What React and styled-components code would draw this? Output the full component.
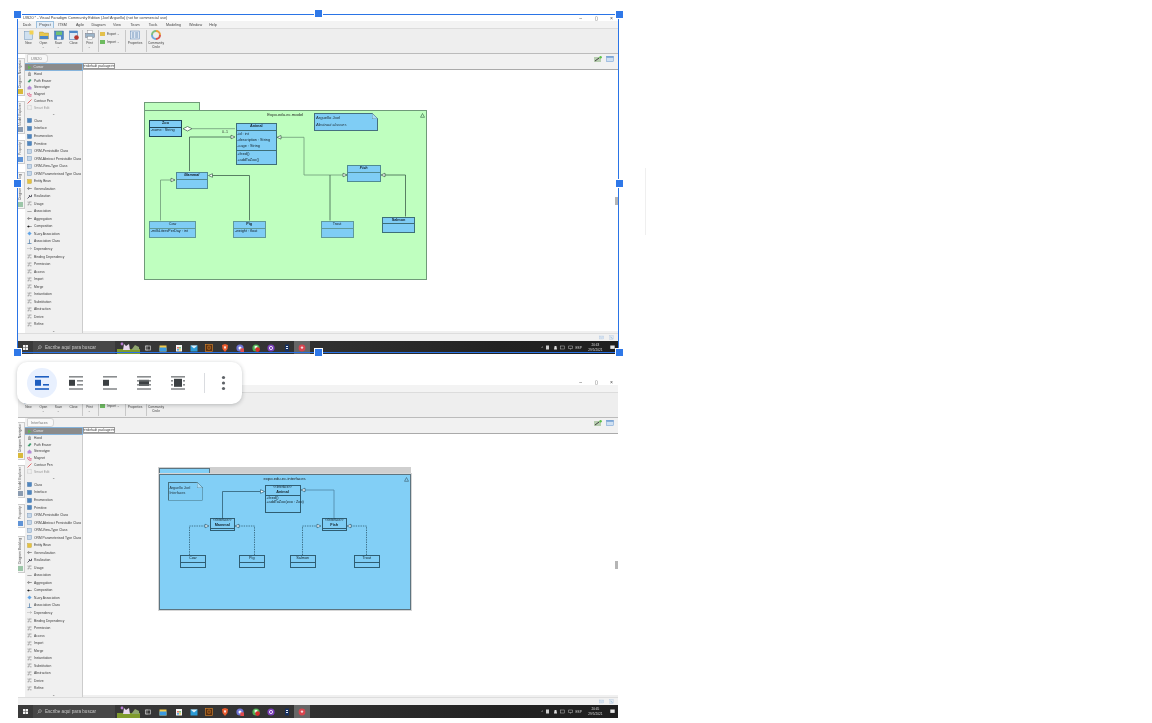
import React from "react";
import styled, { createGlobalStyle } from "styled-components";

const GlobalStyle = createGlobalStyle`
  html, body { margin: 0; padding: 0; background: #fff; }
  body { font-family: "Liberation Sans", Arial, sans-serif; }
`;

const Page = styled.div`
  position: relative;
  width: 1152px;
  height: 723px;
  overflow: hidden;
  padding: 15px 0 0 18px;
  box-sizing: border-box;
  background: #fff;
`;

const ShotFrame = styled.div`
  width: 600px;
  height: 339px;
  margin-bottom: 25px;
  display: flex;
  flex-direction: column;
  background: #fff;
  color: #333;
  filter: blur(0.3px);
`;

const TitleBar = styled.div`
  height: 6px;
  display: flex;
  align-items: center;
  padding-left: 5px;
  font-size: 3.8px;
  white-space: nowrap;
  color: #444;
`;
const WindowButtons = styled.div`
  margin-left: auto;
  display: flex;
  gap: 12.5px;
  padding-right: 5px;
  font-size: 5px;
  color: #444;
`;
const MenuBar = styled.div`
  height: 7px;
  display: flex;
  align-items: stretch;
  background: #f3f3f3;
  font-size: 3.7px;
  color: #444;
`;
const MenuItem = styled.div`
  width: ${(p) => p.$w}px;
  display: flex;
  align-items: center;
  justify-content: center;
  background: ${(p) => (p.$active ? "#e4eef8" : "transparent")};
  border: ${(p) => (p.$active ? "0.5px solid #9cc0de" : "none")};
  border-bottom: none;
  box-sizing: border-box;
`;
const Ribbon = styled.div`
  height: 26px;
  box-sizing: border-box;
  display: flex;
  background: #eeeeee;
  border-top: 1px solid #dcdcdc;
  border-bottom: 1px solid #bbb;
  padding: 1px 0 0 4px;
`;
const RibbonGroup = styled.div`
  display: flex;
  gap: ${(p) => p.$gap || 4}px;
  padding: 0 3px 0 1px;
  height: 22px;
  border-right: ${(p) => (p.$last ? "none" : "0.5px solid #c8c8c8")};
`;
const RibbonItem = styled.div`
  width: ${(p) => p.$w || 11}px;
  display: flex;
  flex-direction: column;
  align-items: center;
  font-size: 3.2px;
  line-height: 3.8px;
  text-align: center;
  color: #444;
  svg { width: 10px; height: 10px; margin-bottom: 2px; }
`;
const RibbonStack = styled.div`
  width: 22px;
  display: flex;
  flex-direction: column;
  gap: 2px;
  padding-top: 1px;
  font-size: 3.2px;
  color: #444;
`;
const StackLine = styled.div`
  display: flex;
  align-items: center;
  gap: 2px;
  height: 6px;
  i { width: 5px; height: 4px; background: ${(p) => p.$color}; display: block; }
`;

const Body = styled.div`
  flex: 1;
  display: flex;
  min-height: 0;
`;
const SideTabs = styled.div`
  width: 7px;
  flex: none;
  display: flex;
  flex-direction: column;
  padding-top: 4px;
  background: #fff;
`;
const SideTab = styled.div`
  height: ${(p) => p.$h}px;
  margin-bottom: ${(p) => p.$mb}px;
  box-sizing: border-box;
  display: flex;
  align-items: flex-start;
  justify-content: center;
  writing-mode: vertical-rl;
  transform: rotate(180deg);
  font-size: 3.4px;
  color: #555;
  background: #f4f4f4;
  border: 0.5px solid #ccc;
  border-right: none;
  padding-top: 6px;
  position: relative;
  white-space: nowrap;
  &::before {
    content: "";
    position: absolute;
    top: 1px;
    left: 1px;
    width: 4.5px;
    height: 4.5px;
    background: ${(p) => p.$icon};
  }
`;
const Main = styled.div`
  flex: 1;
  min-width: 0;
  display: flex;
  flex-direction: column;
`;
const CrumbRow = styled.div`
  height: 9px;
  flex: none;
  box-sizing: border-box;
  display: flex;
  align-items: center;
  padding-left: 2px;
  background: #f1f1f1;
`;
const Crumb = styled.div`
  height: 6.5px;
  padding: 0 5px 0 3px;
  display: flex;
  align-items: center;
  font-size: 3.8px;
  color: #777;
  background: #f8f8f8;
  border: 0.5px solid #d4d4d4;
  border-radius: 1px 3px 3px 1px;
`;
const CrumbTools = styled.div`
  margin-left: auto;
  display: flex;
  gap: 4px;
  padding-right: 4px;
  svg { width: 8px; height: 6px; }
`;
const Workspace = styled.div`
  flex: 1;
  display: flex;
  min-height: 0;
`;
const Palette = styled.div`
  width: 58px;
  flex: none;
  box-sizing: border-box;
  padding-top: 0.6px;
  background: #f0f0f0;
  border-right: 0.5px solid #ccc;
`;
const PaletteRow = styled.div`
  height: ${(p) => p.$h}px;
  box-sizing: border-box;
  display: flex;
  align-items: center;
  gap: 2px;
  padding-left: ${(p) => (p.$selected ? 1.5 : 2)}px;
  font-size: 3.3px;
  white-space: nowrap;
  color: ${(p) => (p.$selected ? "#e8e8e8" : p.$muted ? "#999" : "#3c3c3c")};
  background: ${(p) => (p.$selected ? "#8b8b8b" : "transparent")};
  outline: ${(p) => (p.$selected ? "0.5px solid #86b4dc" : "none")};
  svg { width: 5px; height: 5px; flex: none; }
`;
const PaletteChevron = styled.div`
  height: ${(p) => p.$h}px;
  display: flex;
  align-items: center;
  justify-content: center;
  font-size: 3.5px;
  color: #666;
`;
const Editor = styled.div`
  flex: 1;
  min-width: 0;
  display: flex;
  flex-direction: column;
`;
const DocTabs = styled.div`
  height: 7px;
  flex: none;
  box-sizing: border-box;
  display: flex;
  align-items: flex-end;
  background: #f1f1f1;
  border-bottom: 1px solid #aaa;
`;
const DocTab = styled.div`
  height: 6px;
  width: 32px;
  box-sizing: border-box;
  display: flex;
  align-items: center;
  justify-content: center;
  font-size: 3.3px;
  color: #333;
  white-space: nowrap;
  background: #fff;
  border: 0.5px solid #999;
`;
const Canvas = styled.div`
  position: relative;
  flex: 1;
  background: #fff;
`;
const CanvasScroll = styled.div`
  position: absolute;
  right: 0;
  top: 127px;
  width: 3px;
  height: 8px;
  background: #b5b5b5;
`;
const BottomStrip = styled.div`
  height: 2px;
  flex: none;
  background: #f0f0f0;
`;
const StatusBar = styled.div`
  height: 8px;
  flex: none;
  display: flex;
  align-items: center;
  justify-content: flex-end;
  gap: 5px;
  padding-right: 4px;
  background: #f1f1f1;
  border-top: 0.5px solid #ddd;
  box-sizing: border-box;
  svg { width: 5px; height: 5px; }
`;

const Taskbar = styled.div`
  height: 13px;
  flex: none;
  display: flex;
  align-items: center;
  background: linear-gradient(90deg, #3a3a3a 0%, #333 45%, #222 80%, #1f1f1f 100%);
  color: #ddd;
`;
const StartButton = styled.div`
  width: 15px;
  display: flex;
  justify-content: center;
  svg { width: 5px; height: 5px; }
`;
const SearchBox = styled.div`
  width: 82px;
  height: 13px;
  box-sizing: border-box;
  display: flex;
  align-items: center;
  gap: 3px;
  padding-left: 4px;
  background: #474747;
  font-size: 4.6px;
  color: #c8c8c8;
  white-space: nowrap;
  svg { width: 5px; height: 5px; }
`;
const SearchPicture = styled.svg`
  width: 23px;
  height: 13px;
  margin-left: 2px;
  flex: none;
`;
const TaskIcons = styled.div`
  display: flex;
  align-items: center;
  margin-left: 0;
`;
const TaskIcon = styled.div`
  width: 15.45px;
  height: 13px;
  display: flex;
  align-items: center;
  justify-content: center;
  background: ${(p) => (p.$active ? "#666" : "transparent")};
  svg { width: 8px; height: 8px; }
`;
const Tray = styled.div`
  margin-left: auto;
  display: flex;
  align-items: center;
  gap: 2.5px;
  padding-right: 3px;
  font-size: 3.2px;
  color: #ddd;
  svg { width: 5px; height: 5px; }
`;
const Clock = styled.div`
  margin: 0 5px 0 4px;
  text-align: center;
  line-height: 4.4px;
  font-size: 3.2px;
`;

/* diagram parts: places on the canvas are the content */
const Package = styled.div`
  position: absolute;
  left: ${(p) => p.$x}px;
  top: ${(p) => p.$y}px;
  width: ${(p) => p.$w}px;
  height: ${(p) => p.$h}px;
  box-sizing: border-box;
  background: ${(p) => p.$fill};
  border: 0.8px solid ${(p) => p.$line};
  box-shadow: ${(p) => (p.$halo ? "0 0 0 1px #d6d6d6" : "none")};
`;
const PackageTab = styled.div`
  position: absolute;
  left: ${(p) => p.$x}px;
  top: ${(p) => p.$y}px;
  width: ${(p) => p.$w}px;
  height: ${(p) => p.$h}px;
  box-sizing: border-box;
  background: ${(p) => p.$fill};
  border: 0.7px solid ${(p) => p.$line};
  border-bottom: none;
`;
const PackageBand = styled.div`
  position: absolute;
  left: ${(p) => p.$x}px;
  top: ${(p) => p.$y}px;
  width: ${(p) => p.$w}px;
  height: ${(p) => p.$h}px;
  background: #cfcfcf;
`;
const PackageName = styled.div`
  position: absolute;
  left: 0;
  right: 0;
  top: 1px;
  text-align: center;
  font-size: 4.2px;
  line-height: 5px;
  color: #222;
`;
const PackageMark = styled.svg`
  position: absolute;
  right: 1px;
  top: 2px;
  width: 5px;
  height: 5px;
`;
const ClassBox = styled.div`
  position: absolute;
  left: ${(p) => p.$x}px;
  top: ${(p) => p.$y}px;
  width: ${(p) => p.$w}px;
  height: ${(p) => p.$h}px;
  box-sizing: border-box;
  display: flex;
  flex-direction: column;
  background: #7fcdf5;
  border: 0.7px solid ${(p) => p.$line || "#3d6f78"};
  font-size: 3.8px;
  line-height: 5px;
  color: #14222a;
  white-space: nowrap;
`;
const ClassHead = styled.div`
  height: ${(p) => p.$h}px;
  flex: none;
  box-sizing: border-box;
  text-align: center;
  font-weight: ${(p) => (p.$plain ? 400 : 700)};
  font-style: ${(p) => (p.$italic ? "italic" : "normal")};
  border-bottom: 0.7px solid ${(p) => p.$line || "#3d6f78"};
`;
const Stereotype = styled.div`
  font-size: 3px;
  line-height: 3.6px;
  font-weight: 400;
`;
const Compartment = styled.div`
  padding-left: 0.8px;
  line-height: ${(p) => p.$lh || 5.4}px;
  border-bottom: ${(p) => (p.$divider ? "0.7px solid #3d6f78" : "none")};
  height: ${(p) => (p.$h ? `${p.$h}px` : "auto")};
  box-sizing: border-box;
`;
const Note = styled.div`
  position: absolute;
  left: ${(p) => p.$x}px;
  top: ${(p) => p.$y}px;
  width: ${(p) => p.$w}px;
  height: ${(p) => p.$h}px;
  padding: ${(p) => p.$pad}px 0 0 1px;
  box-sizing: border-box;
  font-size: ${(p) => p.$fs}px;
  line-height: ${(p) => p.$lh}px;
  color: #1f2d35;
  background: #7fcdf5;
  border: 0.7px solid #45707f;
  clip-path: polygon(0 0, calc(100% - 6px) 0, 100% 6px, 100% 100%, 0 100%);
`;
const NoteFold = styled.svg`
  position: absolute;
  left: ${(p) => p.$x}px;
  top: ${(p) => p.$y}px;
  width: 6px;
  height: 6px;
`;
const Wires = styled.svg`
  position: absolute;
  left: 0;
  top: 0;
  width: 535px;
  height: 261px;
  pointer-events: none;
`;
const Multiplicity = styled.div`
  position: absolute;
  left: ${(p) => p.$x}px;
  top: ${(p) => p.$y}px;
  font-size: 3.6px;
  color: #333;
`;

/* overlays on the page */
const SelectionFrame = styled.div`
  position: absolute;
  left: 17px;
  top: 14px;
  width: 602px;
  height: 339px;
  box-sizing: border-box;
  border: 1px solid #2a74e6;
`;
const Handle = styled.div`
  position: absolute;
  left: ${(p) => p.$x}px;
  top: ${(p) => p.$y}px;
  width: 7px;
  height: 7px;
  background: #2f78e8;
  outline: 1px solid #fff;
`;
const FaintLine = styled.div`
  position: absolute;
  left: 645px;
  top: 168px;
  width: 1px;
  height: 67px;
  background: #efefef;
`;
const Toolbar = styled.div`
  position: absolute;
  left: 17px;
  top: 362px;
  width: 225px;
  height: 42px;
  box-sizing: border-box;
  display: flex;
  align-items: center;
  padding-left: 10px;
  background: #fff;
  border-radius: 10px;
  box-shadow: 0 1px 4px rgba(60, 64, 67, 0.32);
`;
const WrapButton = styled.div`
  width: 30px;
  height: 30px;
  margin-right: 4px;
  display: flex;
  align-items: center;
  justify-content: center;
  border-radius: 50%;
  background: ${(p) => (p.$active ? "#e8f0fe" : "transparent")};
  color: ${(p) => (p.$active ? "#1f5fc0" : "#6d7073")};
  svg { width: 14px; height: 14px; }
`;
const ToolbarDivider = styled.div`
  width: 1px;
  height: 20px;
  margin: 0 16px 0 7px;
  background: #dadce0;
`;
const MoreDots = styled.svg`
  width: 5px;
  height: 16px;
  color: #5f6368;
`;

const menu = [
  ["Dash", 18], ["Project", 18], ["ITSM", 17], ["Agile", 18], ["Diagram", 19],
  ["View", 18], ["Team", 18], ["Tools", 18], ["Modeling", 23], ["Window", 21], ["Help", 14],
];

const tabs = [
  ["Diagram Navigator", 38, 5, "#d8b93a"],
  ["Model Explorer", 33, 6, "#8a9bb0"],
  ["Property", 24, 8, "#5f93d6"],
  ["Diagram Backlog", 37, 0, "#9cc6a8"],
];

const glyphs = {
  cursor: <path d="M1 0.5 L4.5 3 L2.6 3.2 L1.6 4.8 Z" fill="#5cc04a" />,
  hand: <path d="M1.5 4.5 V1.5 M2.5 4.5 V0.8 M3.5 4.5 V1.5 M1 4.6 H4" stroke="#666" strokeWidth="0.5" fill="none" />,
  eraser: <path d="M0.5 4 L3 1 L4.5 2 L2.5 4.5 Z" fill="#3f9a6d" />,
  stereo: <path d="M0.5 4.5 H4.5 V2.5 L2.5 0.5 L0.5 2.5 Z" fill="#b48bd6" />,
  magnet: <path d="M1 1 C0 3 2 4.8 4.5 4 M2.5 0.8 C1.8 2.2 3 3 4.5 2.6" stroke="#df3c6c" strokeWidth="0.8" fill="none" />,
  pen: <path d="M0.5 4.5 L4.5 0.5" stroke="#d33" strokeWidth="0.7" />,
  edit: <rect x="0.6" y="0.6" width="3.8" height="3.8" fill="none" stroke="#aaa" strokeWidth="0.5" strokeDasharray="0.7 0.5" />,
  cls: <rect x="0.4" y="0.4" width="4.2" height="4.2" fill="#4f86c0" stroke="#2d5f94" strokeWidth="0.3" />,
  orm: <rect x="0.4" y="0.4" width="4.2" height="4.2" fill="#c4d6e8" stroke="#6d8fb3" strokeWidth="0.4" />,
  bean: <rect x="0.5" y="0.5" width="4" height="4" fill="#e6c23e" stroke="#a78a22" strokeWidth="0.3" />,
  gen: <path d="M4.8 2.5 H1.6 M0.4 2.5 L1.8 1.5 V3.5 Z" stroke="#444" strokeWidth="0.5" fill="#fff" />,
  real: <path d="M0.5 4.5 L2.4 2.6 H4.5 V0.8 M2.4 2.6 V1" stroke="#334" strokeWidth="0.8" fill="none" />,
  line: <path d="M0.3 2.5 H4.7" stroke="#666" strokeWidth="0.5" />,
  comp: <path d="M0.3 2.5 L1.5 1.7 L2.7 2.5 L1.5 3.3 Z M2.7 2.5 H4.8" stroke="#222" strokeWidth="0.4" fill="#222" />,
  nary: <path d="M2.5 0.5 L4.6 2.5 L2.5 4.5 L0.4 2.5 Z" fill="#63a5e6" />,
  aclass: <path d="M2.5 0.4 V4.6 M0.5 4.5 H4.5" stroke="#4f7ba8" strokeWidth="0.7" />,
  dep: <path d="M0.4 2.5 H4.4 M3 1.3 L4.5 2.5 L3 3.7" stroke="#666" strokeWidth="0.4" strokeDasharray="0.8 0.4" fill="none" />,
  rel: <path d="M0.5 3.8 H2 V1 H4.5 M0.5 1 H1.5 M3 3.8 H4.5" stroke="#777" strokeWidth="0.6" fill="none" />,
};

const toolsTop = [
  ["Cursor", "cursor"], ["Hand", "hand"], ["Path Eraser", "eraser"], ["Stereotype", "stereo"],
  ["Magnet", "magnet"], ["Contour Pen", "pen"], ["Smart Edit", "edit"],
];
const toolsRest = [
  ["Class", "cls"], ["Interface", "cls"], ["Enumeration", "cls"], ["Primitive", "cls"],
  ["ORM-Persistable Class", "orm"], ["ORM-Abstract Persistable Class", "orm"],
  ["ORM-View-Type Class", "orm"], ["ORM Parameterised Type Class", "orm"], ["Entity Bean", "bean"],
  ["Generalization", "gen"], ["Realization", "real"], ["Usage", "rel"], ["Association", "line"],
  ["Aggregation", "gen"], ["Composition", "comp"], ["N-ary Association", "nary"],
  ["Association Class", "aclass"], ["Dependency", "dep"], ["Binding Dependency", "rel"],
  ["Permission", "rel"], ["Access", "rel"], ["Import", "rel"], ["Merge", "rel"],
  ["Instantiation", "rel"], ["Substitution", "rel"], ["Abstraction", "rel"], ["Derive", "rel"], ["Refine", "rel"],
];

const PaletteIcon = ({ kind }) => <svg viewBox="0 0 5 5">{glyphs[kind]}</svg>;

const NewIcon = () => (
  <svg viewBox="0 0 10 10">
    <rect x="0.5" y="1.5" width="8" height="8" fill="#cfe0f0" stroke="#6f93b8" strokeWidth="0.5" />
    <rect x="5.5" y="0.5" width="4" height="4" fill="#f2d255" />
  </svg>
);
const OpenIcon = () => (
  <svg viewBox="0 0 10 10">
    <path d="M0.5 2 H4 L5 3 H9.5 V9 H0.5 Z" fill="#e9c84d" stroke="#a88b2a" strokeWidth="0.4" />
    <rect x="0.8" y="6" width="8.4" height="3" fill="#4d87c7" />
  </svg>
);
const SaveIcon = () => (
  <svg viewBox="0 0 10 10">
    <rect x="0.5" y="1" width="9" height="8.5" fill="#4d87c7" stroke="#2f6098" strokeWidth="0.4" />
    <rect x="2" y="1.5" width="6" height="3.5" fill="#6fbf73" />
    <rect x="3" y="6.5" width="4" height="3" fill="#e8eef5" />
  </svg>
);
const CloseIcon = () => (
  <svg viewBox="0 0 10 10">
    <rect x="0.5" y="1" width="8" height="8.5" fill="#dfe8f2" stroke="#4d7fb8" strokeWidth="0.6" />
    <rect x="0.5" y="1" width="8" height="2" fill="#4d87c7" />
    <circle cx="7.5" cy="7.5" r="2.3" fill="#b8362e" />
  </svg>
);
const PrintIcon = () => (
  <svg viewBox="0 0 10 10">
    <rect x="2.5" y="0.5" width="5" height="3" fill="#fff" stroke="#888" strokeWidth="0.4" />
    <rect x="0.5" y="3.5" width="9" height="4" fill="#9bb4c8" stroke="#667" strokeWidth="0.4" />
    <rect x="2.5" y="6.5" width="5" height="3" fill="#fff" stroke="#888" strokeWidth="0.4" />
  </svg>
);
const PropsIcon = () => (
  <svg viewBox="0 0 10 10">
    <rect x="0.5" y="1" width="9" height="8" fill="#dce6f2" stroke="#5f86b3" strokeWidth="0.5" />
    <path d="M2 3 H4 M2 5 H4 M2 7 H4 M5.2 3 H8 M5.2 5 H8 M5.2 7 H8" stroke="#4d78ab" strokeWidth="0.7" />
  </svg>
);
const CircleIcon = () => (
  <svg viewBox="0 0 10 10" fill="none" strokeWidth="2">
    <path d="M5 1 A4 4 0 0 1 9 5" stroke="#e9a13b" />
    <path d="M9 5 A4 4 0 0 1 5 9" stroke="#d9534f" />
    <path d="M5 9 A4 4 0 0 1 1 5" stroke="#6fa8dc" />
    <path d="M1 5 A4 4 0 0 1 5 1" stroke="#7fbf7f" />
  </svg>
);
const DocSwitchIcon = () => (
  <svg viewBox="0 0 8 6">
    <rect x="0" y="1" width="7" height="5" fill="#b7cdb0" />
    <path d="M1 5 L5 2" stroke="#333" strokeWidth="0.9" />
    <circle cx="6.6" cy="1.2" r="1.2" fill="#5cc04a" />
  </svg>
);
const LayoutIcon = () => (
  <svg viewBox="0 0 8 6">
    <rect x="0.5" y="0.3" width="7" height="5.4" fill="#cfe0f2" stroke="#6c9ad0" strokeWidth="0.5" />
    <rect x="0.5" y="0.3" width="7" height="1.4" fill="#6c9ad0" />
  </svg>
);
const MailIcon = () => (
  <svg viewBox="0 0 5 5">
    <rect x="0.3" y="1" width="4.4" height="3" fill="#dbe6f2" stroke="#a9c1dc" strokeWidth="0.3" />
    <path d="M0.3 1 L2.5 2.8 L4.7 1" stroke="#a9c1dc" strokeWidth="0.3" fill="none" />
  </svg>
);
const PageIcon = () => (
  <svg viewBox="0 0 5 5">
    <rect x="0.7" y="0.3" width="3.6" height="4.4" fill="#e0e8f0" stroke="#a9c1dc" strokeWidth="0.3" />
    <path d="M1.5 2 L3.5 3.5" stroke="#5c9cc8" strokeWidth="0.5" />
  </svg>
);

const taskIcons = [
  <svg key="a" viewBox="0 0 8 8"><rect x="1.5" y="2" width="5" height="4" fill="none" stroke="#ccc" strokeWidth="0.7" /><path d="M3 1 V7" stroke="#ccc" strokeWidth="0.5" /></svg>,
  <svg key="b" viewBox="0 0 8 8"><rect x="0.5" y="1.5" width="7" height="6" fill="#f2c94c" /><rect x="0.5" y="3.5" width="7" height="4" fill="#3b9ae1" /></svg>,
  <svg key="c" viewBox="0 0 8 8"><rect x="1" y="1" width="6" height="6.5" fill="#f5f5f5" /><rect x="2.2" y="3" width="1.6" height="1.6" fill="#e2574c" /><rect x="4.2" y="3" width="1.6" height="1.6" fill="#5cb85c" /><rect x="2.2" y="5" width="1.6" height="1.6" fill="#3b9ae1" /><rect x="4.2" y="5" width="1.6" height="1.6" fill="#f2c94c" /></svg>,
  <svg key="d" viewBox="0 0 8 8"><rect x="0.5" y="1.5" width="7" height="6" fill="#2b9bd6" /><path d="M0.5 1.5 L4 4.5 L7.5 1.5" fill="#d9eefa" /></svg>,
  <svg key="e" viewBox="0 0 8 8"><rect x="0.5" y="0.5" width="7" height="7" fill="#5a2f0f" stroke="#e08a2e" strokeWidth="0.6" /><path d="M2.8 2 H5.2 V5.2 H2.8 Z" fill="none" stroke="#e08a2e" strokeWidth="0.6" /></svg>,
  <svg key="f" viewBox="0 0 8 8"><path d="M1 1 L4 0 L7 1 L6.5 5 L4 8 L1.5 5 Z" fill="#ea5a2c" /><path d="M2.8 2.6 H5.2 L4 5.4 Z" fill="#fff" /></svg>,
  <svg key="g" viewBox="0 0 8 8"><circle cx="4" cy="4" r="3.6" fill="#6f74d6" /><circle cx="4" cy="4" r="1.5" fill="#fff" /><rect x="4.4" y="4.4" width="3.6" height="3.6" fill="#e04b4b" /></svg>,
  <svg key="h" viewBox="0 0 8 8"><circle cx="4" cy="4" r="3.6" fill="#4bb04f" /><rect x="2.6" y="1.8" width="2.8" height="2.8" fill="#eaf7ea" /><circle cx="5.6" cy="5.6" r="2.3" fill="#d92c2c" /></svg>,
  <svg key="i" viewBox="0 0 8 8"><circle cx="4" cy="4" r="3.6" fill="#7a3fb8" /><circle cx="4" cy="4" r="1.6" fill="none" stroke="#fff" strokeWidth="0.8" /></svg>,
  <svg key="j" viewBox="0 0 8 8"><rect x="2" y="0.5" width="4" height="7" fill="#16305f" /><rect x="3" y="2" width="2" height="1" fill="#dfe7f5" /><rect x="3" y="4" width="2" height="1" fill="#dfe7f5" /></svg>,
  <svg key="k" viewBox="0 0 8 8"><circle cx="4" cy="4" r="3.4" fill="#d8454f" /><circle cx="4" cy="3.6" r="1.2" fill="#f7d9dc" /></svg>,
];

const Shot = ({ crumb, clock, children }) => (
  <ShotFrame>
    <TitleBar>
      UIS20 * - Visual Paradigm Community Edition (Joel Arguello) (not for commercial use)
      <WindowButtons>
        <span>–</span>
        <span>▯</span>
        <span>×</span>
      </WindowButtons>
    </TitleBar>
    <MenuBar>
      {menu.map(([name, w]) => (
        <MenuItem key={name} $w={w} $active={name === "Project"}>{name}</MenuItem>
      ))}
    </MenuBar>
    <Ribbon>
      <RibbonGroup $gap={4}>
        <RibbonItem><NewIcon />New</RibbonItem>
        <RibbonItem><OpenIcon />Open<br />⌄</RibbonItem>
        <RibbonItem><SaveIcon />Save<br />⌄</RibbonItem>
        <RibbonItem><CloseIcon />Close</RibbonItem>
      </RibbonGroup>
      <RibbonGroup>
        <RibbonItem><PrintIcon />Print<br />⌄</RibbonItem>
      </RibbonGroup>
      <RibbonGroup>
        <RibbonStack>
          <StackLine $color="#e3c04b"><i />Export ⌄</StackLine>
          <StackLine $color="#6dbb5f"><i />Import ⌄</StackLine>
        </RibbonStack>
      </RibbonGroup>
      <RibbonGroup>
        <RibbonItem $w={16}><PropsIcon />Properties</RibbonItem>
      </RibbonGroup>
      <RibbonGroup $last>
        <RibbonItem $w={16}><CircleIcon />Community<br />Circle</RibbonItem>
      </RibbonGroup>
    </Ribbon>
    <Body>
      <SideTabs>
        {tabs.map(([name, h, mb, icon]) => (
          <SideTab key={name} $h={h} $mb={mb} $icon={icon}>{name}</SideTab>
        ))}
      </SideTabs>
      <Main>
        <CrumbRow>
          <Crumb>{crumb}</Crumb>
          <CrumbTools>
            <DocSwitchIcon />
            <LayoutIcon />
          </CrumbTools>
        </CrumbRow>
        <Workspace>
          <Palette>
            {toolsTop.map(([name, kind], i) => (
              <PaletteRow key={name} $h={6.83} $selected={i === 0} $muted={kind === "edit"}>
                <PaletteIcon kind={kind} />
                {name}
              </PaletteRow>
            ))}
            <PaletteChevron $h={5.8}>⌄</PaletteChevron>
            {toolsRest.map(([name, kind]) => (
              <PaletteRow key={name} $h={7.54}>
                <PaletteIcon kind={kind} />
                {name}
              </PaletteRow>
            ))}
            <PaletteChevron $h={5}>⌄</PaletteChevron>
          </Palette>
          <Editor>
            <DocTabs>
              <DocTab>&lt;&lt;default package&gt;&gt;</DocTab>
            </DocTabs>
            <Canvas>
              {children}
              <CanvasScroll />
            </Canvas>
            <BottomStrip />
          </Editor>
        </Workspace>
      </Main>
    </Body>
    <StatusBar>
      <MailIcon />
      <PageIcon />
    </StatusBar>
    <Taskbar>
      <StartButton>
        <svg viewBox="0 0 5 5" fill="#f2f2f2">
          <rect x="0" y="0" width="2.3" height="2.3" />
          <rect x="2.7" y="0" width="2.3" height="2.3" />
          <rect x="0" y="2.7" width="2.3" height="2.3" />
          <rect x="2.7" y="2.7" width="2.3" height="2.3" />
        </svg>
      </StartButton>
      <SearchBox>
        <svg viewBox="0 0 5 5" fill="none" stroke="#ccc" strokeWidth="0.5">
          <circle cx="3" cy="2" r="1.4" />
          <path d="M2 3 L0.6 4.4" />
        </svg>
        Escribe aquí para buscar
      </SearchBox>
      <SearchPicture viewBox="0 0 23 13">
        <rect x="0" y="8" width="23" height="5" fill="#7f9b2d" />
        <path d="M6 9 L7 3 L9 5 L12 3 L13 9 Z" fill="#e9d8ee" />
        <path d="M15 8 L18 4 L22 6 V9 H15 Z" fill="#8fa56e" />
        <circle cx="5" cy="3" r="1.4" fill="#b57bd0" />
      </SearchPicture>
      <TaskIcons>
        {taskIcons.map((icon, i) => (
          <TaskIcon key={i} $active={i === taskIcons.length - 1}>{icon}</TaskIcon>
        ))}
      </TaskIcons>
      <Tray>
        <span>^</span>
        <svg viewBox="0 0 5 5"><rect x="1" y="0.5" width="3" height="4" fill="#ccc" /></svg>
        <svg viewBox="0 0 5 5"><path d="M1 4.5 H4 L3.4 1 H1.6 Z" fill="#ddd" /></svg>
        <svg viewBox="0 0 5 5"><rect x="0.5" y="1" width="4" height="3" fill="none" stroke="#bbb" strokeWidth="0.5" /></svg>
        <svg viewBox="0 0 5 5"><path d="M0.5 1 H4.5 V3.5 H0.5 Z M2.5 3.5 V4.7" fill="none" stroke="#bbb" strokeWidth="0.5" /></svg>
        <span>ESP</span>
        <Clock>{clock}<br />29/5/2021</Clock>
        <svg viewBox="0 0 5 5"><rect x="0.3" y="0.5" width="4.4" height="3.4" fill="#e6e6e6" /></svg>
      </Tray>
    </Taskbar>
  </ShotFrame>
);

// triangle head pointing at (x, y), dir = 1 tip on the left, -1 tip on the right
const Head = ({ x, y, dir, stroke }) => (
  <polygon
    points={`${x},${y} ${x + dir * 4},${y - 1.8} ${x + dir * 4},${y + 1.8}`}
    fill="#fff"
    stroke={stroke}
    strokeWidth="0.7"
  />
);

const wire = "#3d5f4b";
const ModelWires = () => (
  <Wires>
    <g fill="none" stroke={wire} strokeWidth="0.8">
      <path d="M109 58.7 H152" stroke="#6f9a78" />
      <path d="M106.5 101 V67 H148" />
      <path d="M264 105 H221 V67.3 H198" stroke="#6f9a78" />
      <path d="M247 150.5 V105" />
      <path d="M322.5 146.5 V105 H299" />
      <path d="M77.5 150.5 V110 H92" stroke="#6f9a78" />
      <path d="M166.5 150.5 V105.5 H126" />
    </g>
    <polygon points="100,58.7 104.5,56.5 109,58.7 104.5,61" fill="#fff" stroke={wire} strokeWidth="0.7" />
    <Head x={152} y={67} dir={-1} stroke={wire} />
    <Head x={194} y={67.3} dir={1} stroke={wire} />
    <Head x={264} y={105} dir={-1} stroke={wire} />
    <Head x={298} y={105} dir={1} stroke={wire} />
    <Head x={92} y={110} dir={-1} stroke={wire} />
    <Head x={125.5} y={105.5} dir={1} stroke={wire} />
  </Wires>
);

const ifaceLine = "#2f5d72";
const InterfaceWires = () => (
  <Wires>
    <g fill="none" stroke={ifaceLine} strokeWidth="0.8">
      <path d="M139.5 84 V57.5 H177" />
      <path d="M251 84 V56 H221" stroke="#4f86a6" />
      <g strokeDasharray="1.4 1">
        <path d="M106.5 121 V92 H122" />
        <path d="M171.5 121 V92 H156" />
        <path d="M219.5 121 V92 H234" />
        <path d="M283.5 121 V92 H268" />
      </g>
    </g>
    <Head x={181.5} y={57.5} dir={-1} stroke={ifaceLine} />
    <Head x={218} y={56} dir={1} stroke={ifaceLine} />
    <Head x={126} y={92} dir={-1} stroke={ifaceLine} />
    <Head x={152} y={92} dir={1} stroke={ifaceLine} />
    <Head x={238} y={92} dir={-1} stroke={ifaceLine} />
    <Head x={264} y={92} dir={1} stroke={ifaceLine} />
  </Wires>
);

const ModelDiagram = () => (
  <>
    <PackageTab $x={61} $y={32} $w={56} $h={9} $fill="#bfffbf" $line="#6f9a78" />
    <Package $x={61} $y={40} $w={282.5} $h={169.5} $fill="#bfffbf" $line="#6f9a78">
      <PackageName>Expo.edu.ec.model</PackageName>
      <PackageMark viewBox="0 0 5 5">
        <path d="M2.5 0.5 L4.5 4.3 H0.5 Z" fill="none" stroke="#2f5f3f" strokeWidth="0.6" />
      </PackageMark>
    </Package>
    <ModelWires />
    <Note $x={231} $y={43} $w={64} $h={18} $pad={1} $fs={4.2} $lh={6.6}>
      Arguello Joel
      <br />
      <em>Abstract classes</em>
    </Note>
    <NoteFold $x={289} $y={43} viewBox="0 0 6 6">
      <path d="M0 0 L6 6 H0 Z" fill="#a8dcf6" stroke="#45707f" strokeWidth="0.6" />
    </NoteFold>
    <ClassBox $x={66} $y={50} $w={33} $h={17} $line="#20485a">
      <ClassHead $h={7} $line="#20485a">Zoo</ClassHead>
      <Compartment>-name : String</Compartment>
    </ClassBox>
    <ClassBox $x={152.5} $y={52.5} $w={41.5} $h={42}>
      <ClassHead $h={7}>Animal</ClassHead>
      <Compartment $divider $h={20} $lh={6.2}>
        -id : int
        <br />
        -description : String
        <br />
        -cage : String
      </Compartment>
      <Compartment $lh={6.2}>
        +feed()
        <br />
        +addToZoo()
      </Compartment>
    </ClassBox>
    <ClassBox $x={92.5} $y={101.5} $w={32.5} $h={17} $line="#4f8a92">
      <ClassHead $h={7} $italic $line="#4f8a92">Mammal</ClassHead>
    </ClassBox>
    <ClassBox $x={264} $y={94.5} $w={33.5} $h={17} $line="#4f8a92">
      <ClassHead $h={7.5} $italic $line="#4f8a92">Fish</ClassHead>
    </ClassBox>
    <ClassBox $x={66} $y={150.5} $w={47} $h={17.5} $line="#5f9a9a">
      <ClassHead $h={7} $plain $line="#5f9a9a">Cow</ClassHead>
      <Compartment>-milkLitersPerDay : int</Compartment>
    </ClassBox>
    <ClassBox $x={150} $y={150.5} $w={32.5} $h={17.5} $line="#5f9a9a">
      <ClassHead $h={7} $line="#5f9a9a">Pig</ClassHead>
      <Compartment>-weight : float</Compartment>
    </ClassBox>
    <ClassBox $x={237.5} $y={150.5} $w={33} $h={17} $line="#5f9a9a">
      <ClassHead $h={7} $plain $line="#5f9a9a">Trout</ClassHead>
    </ClassBox>
    <ClassBox $x={299} $y={146.5} $w={33} $h={16.5}>
      <ClassHead $h={6.5}>Salmon</ClassHead>
    </ClassBox>
    <Multiplicity $x={139} $y={60}>0..1</Multiplicity>
  </>
);

const InterfaceDiagram = () => (
  <>
    <PackageBand $x={75} $y={33} $w={253} $h={7} />
    <PackageTab $x={76} $y={34} $w={51} $h={7} $fill="#82cff6" $line="#5c7480" />
    <Package $x={75.5} $y={40} $w={252} $h={135.5} $fill="#82cff6" $line="#5c7480" $halo>
      <PackageName>expo.edu.ec.interfaces</PackageName>
      <PackageMark viewBox="0 0 5 5">
        <path d="M2.5 0.5 L4.5 4.3 H0.5 Z" fill="none" stroke="#3a5a6a" strokeWidth="0.6" />
      </PackageMark>
    </Package>
    <InterfaceWires />
    <Note $x={84.5} $y={48} $w={35} $h={18.5} $pad={3} $fs={3.6} $lh={5}>
      Arguello Joel
      <br />
      Interfaces
    </Note>
    <NoteFold $x={113.5} $y={48} viewBox="0 0 6 6">
      <path d="M0 0 L6 6 H0 Z" fill="#a8dcf6" stroke="#45707f" strokeWidth="0.6" />
    </NoteFold>
    <ClassBox $x={181.5} $y={51} $w={36} $h={28} $line={ifaceLine}>
      <ClassHead $h={9.5} $line={ifaceLine}>
        <Stereotype>&lt;&lt;Interface&gt;&gt;</Stereotype>
        Animal
      </ClassHead>
      <Compartment $lh={4.6}>
        +feed()
        <br />
        +addToZoo(zoo : Zoo)
      </Compartment>
    </ClassBox>
    <ClassBox $x={126.5} $y={84} $w={25.5} $h={13} $line={ifaceLine}>
      <ClassHead $h={10} $line={ifaceLine}>
        <Stereotype>&lt;&lt;Interface&gt;&gt;</Stereotype>
        Mammal
      </ClassHead>
    </ClassBox>
    <ClassBox $x={238.5} $y={84} $w={25.5} $h={13} $line={ifaceLine}>
      <ClassHead $h={10} $line={ifaceLine}>
        <Stereotype>&lt;&lt;Interface&gt;&gt;</Stereotype>
        Fish
      </ClassHead>
    </ClassBox>
    {[["Cow", 97], ["Pig", 156], ["Salmon", 207], ["Trout", 271]].map(([name, x]) => (
      <ClassBox key={name} $x={x} $y={121} $w={25.5} $h={13} $line={ifaceLine}>
        <ClassHead $h={6.5} $plain $line={ifaceLine}>{name}</ClassHead>
      </ClassBox>
    ))}
  </>
);

const wrapIcons = [
  <>
    <rect x="0" y="0" width="14" height="1.6" />
    <rect x="0" y="3.8" width="6" height="6" />
    <rect x="8" y="8" width="6" height="1.6" />
    <rect x="0" y="12.2" width="14" height="1.6" />
  </>,
  <>
    <rect x="0" y="0" width="14" height="1.6" opacity="0.8" />
    <rect x="0" y="3.8" width="6" height="6" fill="#3c4043" />
    <rect x="8" y="4" width="6" height="1.6" opacity="0.8" />
    <rect x="8" y="8" width="6" height="1.6" opacity="0.8" />
    <rect x="0" y="12.2" width="14" height="1.6" opacity="0.8" />
  </>,
  <>
    <rect x="0" y="0" width="14" height="1.6" opacity="0.8" />
    <rect x="0" y="3.8" width="6" height="6" fill="#3c4043" />
    <rect x="0" y="12.2" width="14" height="1.6" opacity="0.8" />
  </>,
  <>
    <rect x="0" y="0" width="14" height="1.6" opacity="0.8" />
    <rect x="2" y="3.8" width="10" height="6" fill="#3c4043" />
    <rect x="0" y="4" width="14" height="1.6" opacity="0.8" />
    <rect x="0" y="8" width="14" height="1.6" opacity="0.8" />
    <rect x="0" y="12.2" width="14" height="1.6" opacity="0.8" />
  </>,
  <>
    <rect x="0" y="0" width="14" height="1.6" opacity="0.8" />
    <rect x="3" y="2.8" width="8" height="8" fill="#3c4043" />
    <rect x="0" y="4" width="2" height="1.6" opacity="0.8" />
    <rect x="12" y="4" width="2" height="1.6" opacity="0.8" />
    <rect x="0" y="8" width="2" height="1.6" opacity="0.8" />
    <rect x="12" y="8" width="2" height="1.6" opacity="0.8" />
    <rect x="0" y="12.2" width="14" height="1.6" opacity="0.8" />
  </>,
];

const handles = [
  [14, 11], [315, 10], [616, 11],
  [14, 180], [616, 180],
  [14, 349], [315, 349], [616, 349],
];

export default function App() {
  return (
    <Page>
      <GlobalStyle />
      <Shot crumb="UIS20" clock="20:43">
        <ModelDiagram />
      </Shot>
      <Shot crumb="Interfaces" clock="20:45">
        <InterfaceDiagram />
      </Shot>
      <SelectionFrame />
      {handles.map(([x, y]) => (
        <Handle key={`${x}-${y}`} $x={x} $y={y} />
      ))}
      <FaintLine />
      <Toolbar>
        {wrapIcons.map((icon, i) => (
          <WrapButton key={i} $active={i === 0}>
            <svg viewBox="0 0 14 14" fill="currentColor">{icon}</svg>
          </WrapButton>
        ))}
        <ToolbarDivider />
        <MoreDots viewBox="0 0 5 16" fill="currentColor">
          <circle cx="2.5" cy="2.5" r="1.6" />
          <circle cx="2.5" cy="8" r="1.6" />
          <circle cx="2.5" cy="13.5" r="1.6" />
        </MoreDots>
      </Toolbar>
    </Page>
  );
}
